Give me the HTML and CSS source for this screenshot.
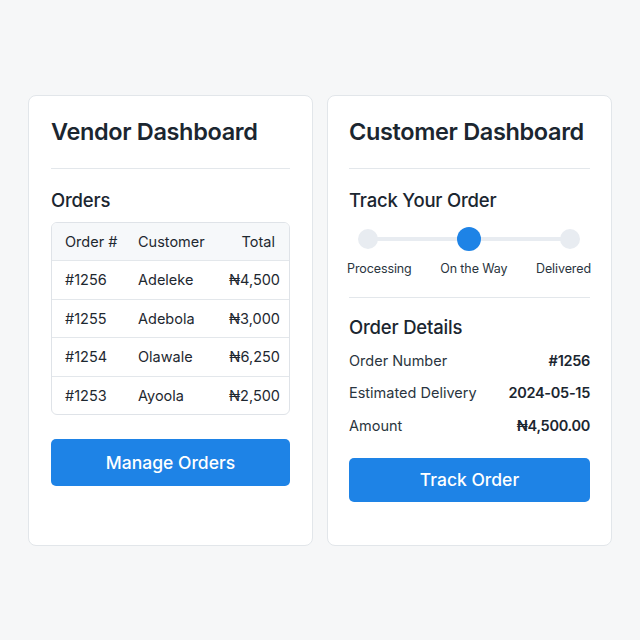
FILE: index.html
```html
<!DOCTYPE html>
<html>
<head>
<meta charset="utf-8">
<link rel="stylesheet" href="styles.css">
</head>
<body>
<div class="page">
  <section class="card">
    <h1 class="title">Vendor Dashboard</h1>
    <div class="divider"></div>
    <h2 class="section-title">Orders</h2>
    <div class="table">
      <div class="row head"><span>Order #</span><span>Customer</span><span class="num">Total</span></div>
      <div class="row"><span>#1256</span><span>Adeleke</span><span class="num">₦4,500</span></div>
      <div class="row"><span>#1255</span><span>Adebola</span><span class="num">₦3,000</span></div>
      <div class="row"><span>#1254</span><span>Olawale</span><span class="num">₦6,250</span></div>
      <div class="row"><span>#1253</span><span>Ayoola</span><span class="num">₦2,500</span></div>
    </div>
    <button class="btn btn-vendor">Manage Orders</button>
  </section>
  <section class="card card-right">
    <h1 class="title">Customer Dashboard</h1>
    <div class="divider"></div>
    <h2 class="section-title">Track Your Order</h2>
    <div class="stepper">
      <div class="track">
        <span class="dot"></span>
        <span class="dot active"></span>
        <span class="dot"></span>
      </div>
      <div class="labels">
        <span>Processing</span>
        <span>On the Way</span>
        <span>Delivered</span>
      </div>
    </div>
    <div class="divider divider-2"></div>
    <h2 class="section-title details-title">Order Details</h2>
    <div class="details">
      <div class="drow"><span>Order Number</span><strong>#1256</strong></div>
      <div class="drow"><span>Estimated Delivery</span><strong>2024-05-15</strong></div>
      <div class="drow"><span>Amount</span><strong>₦4,500.00</strong></div>
    </div>
    <button class="btn btn-customer">Track Order</button>
  </section>
</div>
</body>
</html>
```
FILE: styles.css
```css
* { box-sizing: border-box; }
html, body { margin: 0; padding: 0; }
body {
  background: #f6f7f8;
  font-family: Inter, "Noto Sans", "DejaVu Sans", sans-serif;
  color: #1c2630;
  width: 640px;
  height: 640px;
}
.page {
  display: flex;
  gap: 14px;
  padding: 95px 28px 0;
}
.card {
  width: 285px;
  height: 451px;
  background: #fff;
  border: 1px solid #e2e6ea;
  border-radius: 8px;
  padding: 18px 22px 0;
  display: flex;
  flex-direction: column;
}
.card-right { padding-left: 21px; padding-right: 21px; }
.title {
  margin: 0;
  font-size: 23.5px;
  font-weight: 600;
  line-height: 36px;
  letter-spacing: -0.35px;
  white-space: nowrap;
  color: #1b2630;
}
.divider {
  height: 1px;
  background: #e3e7eb;
  margin-top: 18px;
}
.section-title {
  margin: 19px 0 0;
  font-size: 18.5px;
  font-weight: 500;
  line-height: 24px;
  letter-spacing: -0.2px;
  color: #1b2630;
}
.table {
  margin-top: 10px;
  border: 1px solid #dfe3e8;
  border-radius: 6px;
  overflow: hidden;
}
.row {
  display: grid;
  grid-template-columns: 73px 1fr auto;
  align-items: center;
  height: 38.5px;
  padding: 0 9px 0 13px;
  font-size: 14.5px;
  color: #1e2830;
  border-top: 1px solid #e3e7eb;
}
.row.head {
  border-top: none;
  background: #f6f8fa;
  height: 37px;
  padding-right: 14px;
}
.num { text-align: right; }
.btn {
  display: block;
  width: 100%;
  border: none;
  border-radius: 5px;
  background: #1e83e6;
  color: #fff;
  font-family: inherit;
  font-size: 17.5px;
  font-weight: 500;
  height: 47px;
}
.btn-vendor { margin-top: 24px; }
.stepper { margin-top: 15px; }
.track {
  position: relative;
  display: flex;
  justify-content: space-between;
  align-items: center;
  height: 24px;
  margin: 0 10px 0 9px;
}
.track::before {
  content: "";
  position: absolute;
  left: 10px;
  right: 10px;
  top: 10px;
  height: 4px;
  background: #e8ecf1;
}
.dot {
  position: relative;
  width: 20px;
  height: 20px;
  border-radius: 50%;
  background: #e8ecf1;
}
.dot.active {
  width: 24px;
  height: 24px;
  background: #1e83e6;
}
.labels {
  display: flex;
  justify-content: space-between;
  margin: 10px -1px 0 -2px;
  font-size: 12.5px;
  letter-spacing: -0.1px;
  color: #2a3540;
}
.divider-2 { margin-top: 21px; }
.details-title { margin-top: 17px; }
.details { margin-top: 5px; }
.drow {
  display: flex;
  justify-content: space-between;
  align-items: center;
  height: 32.5px;
  font-size: 14.5px;
  color: #2a3540;
}
.drow strong {
  font-size: 14.5px;
  font-weight: 600;
  letter-spacing: -0.3px;
  color: #1b2630;
}
.btn-customer {
  margin-top: 16px;
  height: 44px;
}
```
